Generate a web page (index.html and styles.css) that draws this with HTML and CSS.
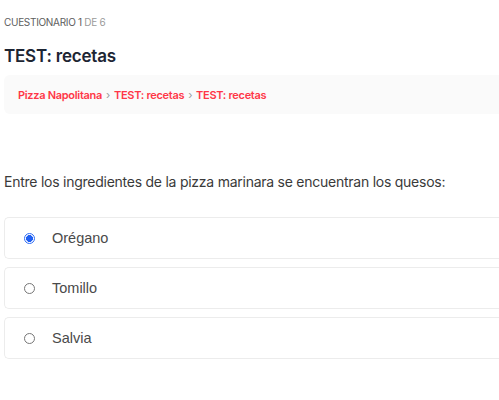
FILE: index.html
```html
<!DOCTYPE html>
<html lang="es">
<head>
<meta charset="utf-8">
<link rel="stylesheet" href="styles.css">
</head>
<body>
<div class="page">
  <div class="counter"><span class="cur">CUESTIONARIO 1</span> <span class="total">DE 6</span></div>
  <h1 class="title">TEST: recetas</h1>
  <div class="crumbs">
    <span class="crumb">Pizza Napolitana</span><span class="sep">›</span><span class="crumb">TEST: recetas</span><span class="sep">›</span><span class="crumb">TEST: recetas</span>
  </div>
  <p class="question">Entre los ingredientes de la pizza marinara se encuentran los quesos:</p>
  <div class="options">
    <label class="option"><span class="radio checked"></span><span class="label">Orégano</span></label>
    <label class="option"><span class="radio"></span><span class="label">Tomillo</span></label>
    <label class="option"><span class="radio"></span><span class="label">Salvia</span></label>
  </div>
</div>
</body>
</html>
```

FILE: styles.css
```css
html, body {
  margin: 0;
  padding: 0;
  background: #ffffff;
}
body {
  font-family: Inter, "Noto Sans", sans-serif;
  overflow: hidden;
}
.page {
  padding: 15px 0 0 4px;
}
.counter {
  font-size: 10px;
  letter-spacing: -0.3px;
  color: #5d5d5d;
  line-height: 14px;
}
.counter .total {
  color: #9a9a9a;
}
.title {
  margin: 16px 0 0 0;
  font-size: 17px;
  font-weight: 600;
  line-height: 22px;
  color: #1d2533;
  letter-spacing: -0.2px;
}
.crumbs {
  margin-top: 8px;
  height: 39px;
  background: #fafafa;
  border-radius: 6px 0 0 6px;
  display: flex;
  align-items: center;
  padding-left: 14px;
  font-size: 11px;
  font-weight: 600;
  letter-spacing: -0.3px;
  color: #ff3647;
}
.sep {
  color: #9a9a9a;
  margin: 0 4px;
  font-weight: 400;
}
.question {
  margin: 58px 0 0 0;
  font-size: 14px;
  line-height: 20px;
  color: #3a3a3a;
  letter-spacing: -0.25px;
}
.options {
  margin-top: 25px;
  display: flex;
  flex-direction: column;
  gap: 8px;
}
.option {
  height: 40px;
  border: 1px solid #ececec;
  border-right: none;
  border-radius: 5px 0 0 5px;
  display: flex;
  align-items: center;
  padding-left: 19px;
}
.radio {
  width: 11px;
  height: 11px;
  border: 1px solid #767676;
  border-radius: 50%;
  box-sizing: border-box;
  flex: none;
}
.radio.checked {
  border-color: #2f6df5;
  background: radial-gradient(circle, #1f5ff2 0 3.2px, #ffffff 3.7px);
}
.label {
  margin-left: 17px;
  font-family: "Liberation Sans", Arial, sans-serif;
  font-size: 14.5px;
  color: #4a4a4a;
}
```
